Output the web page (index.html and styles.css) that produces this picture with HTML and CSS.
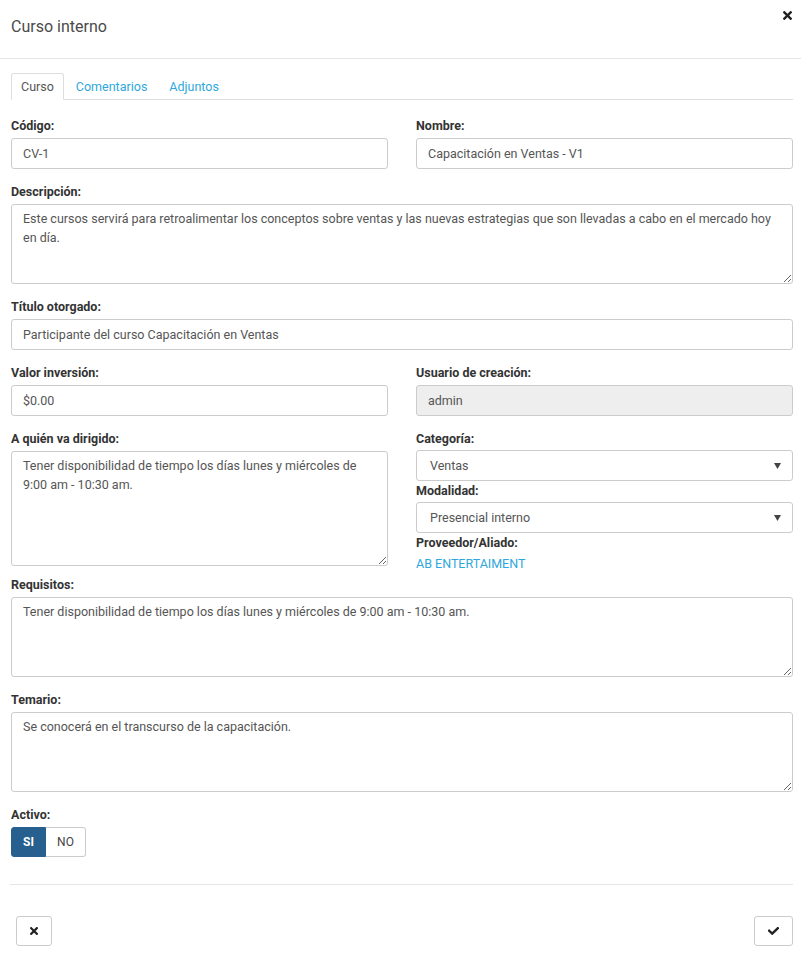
FILE: index.html
```html
<!DOCTYPE html>
<html lang="es">
<head>
<meta charset="utf-8">
<title>Curso interno</title>
<link rel="stylesheet" href="styles.css">
</head>
<body>
<div class="modal">
  <div class="modal-header">
    <h4 class="modal-title">Curso interno</h4>
    <button class="close" type="button" aria-label="Cerrar">
      <svg width="9" height="9" viewBox="0 0 10 10"><path d="M1.5 1.5 L8.5 8.5 M8.5 1.5 L1.5 8.5" stroke="#222" stroke-width="2.6" stroke-linecap="square"/></svg>
    </button>
  </div>
  <div class="modal-body">
    <ul class="tabs">
      <li class="tab active"><a>Curso</a></li>
      <li class="tab"><a>Comentarios</a></li>
      <li class="tab"><a>Adjuntos</a></li>
    </ul>
    <div class="tab-content">
      <div class="row">
        <div class="group">
          <label>Código:</label>
          <input class="control" type="text" value="CV-1">
        </div>
        <div class="group">
          <label>Nombre:</label>
          <input class="control" type="text" value="Capacitación en Ventas - V1">
        </div>
      </div>
      <div class="group">
        <label>Descripción:</label>
        <textarea class="control area">Este cursos servirá para retroalimentar los conceptos sobre ventas y las nuevas estrategias que son llevadas a cabo en el mercado hoy en día.</textarea>
      </div>
      <div class="group">
        <label>Título otorgado:</label>
        <input class="control" type="text" value="Participante del curso Capacitación en Ventas">
      </div>
      <div class="row">
        <div class="group">
          <label>Valor inversión:</label>
          <input class="control" type="text" value="$0.00">
        </div>
        <div class="group">
          <label>Usuario de creación:</label>
          <input class="control disabled" type="text" value="admin" disabled>
        </div>
      </div>
      <div class="row row-tight">
        <div class="col">
          <label>A quién va dirigido:</label>
          <textarea class="control area tall">Tener disponibilidad de tiempo los días lunes y miércoles de 9:00 am - 10:30 am.</textarea>
        </div>
        <div class="col">
          <label>Categoría:</label>
          <div class="control select"><span>Ventas</span><svg width="7" height="6" viewBox="0 0 7 6"><path d="M0 0 H7 L3.5 6 Z" fill="#444"/></svg></div>
          <label>Modalidad:</label>
          <div class="control select"><span>Presencial interno</span><svg width="7" height="6" viewBox="0 0 7 6"><path d="M0 0 H7 L3.5 6 Z" fill="#444"/></svg></div>
          <label>Proveedor/Aliado:</label>
          <a class="link">AB ENTERTAIMENT</a>
        </div>
      </div>
      <div class="group">
        <label>Requisitos:</label>
        <textarea class="control area">Tener disponibilidad de tiempo los días lunes y miércoles de 9:00 am - 10:30 am.</textarea>
      </div>
      <div class="group">
        <label>Temario:</label>
        <textarea class="control area">Se conocerá en el transcurso de la capacitación.</textarea>
      </div>
      <div class="group last">
        <label>Activo:</label>
        <div class="btn-group">
          <button class="toggle on" type="button">SI</button>
          <button class="toggle" type="button">NO</button>
        </div>
      </div>
    </div>
  </div>
  <div class="modal-footer">
    <button class="btn btn-cancel" type="button" aria-label="Cancelar">
      <svg width="8" height="8" viewBox="0 0 10 10"><path d="M1.5 1.5 L8.5 8.5 M8.5 1.5 L1.5 8.5" stroke="#222" stroke-width="2.8" stroke-linecap="square"/></svg>
    </button>
    <button class="btn btn-ok" type="button" aria-label="Guardar">
      <svg width="11" height="8" viewBox="0 0 11 8"><path d="M1.2 3.8 L4.2 6.6 L9.8 1.2" fill="none" stroke="#222" stroke-width="2.4" stroke-linecap="square" stroke-linejoin="miter"/></svg>
    </button>
  </div>
</div>
</body>
</html>
```

FILE: styles.css
```css
* { box-sizing: border-box; }
html, body { margin: 0; padding: 0; background: #fff; }
body {
  font-family: Roboto, "Liberation Sans", Arial, sans-serif;
  font-size: 12.5px;
  color: #555;
}
.modal { width: 801px; }
.modal-header {
  display: flex;
  justify-content: space-between;
  align-items: flex-start;
  height: 59px;
  padding: 15px 9px 0 11px;
  border-bottom: 1px solid #e5e5e5;
}
.modal-title {
  margin: 0;
  font-size: 16px;
  font-weight: 400;
  line-height: 24px;
  color: #4a4a4a;
}
.close {
  border: 0;
  background: none;
  padding: 0;
  margin-top: -4px;
  line-height: 0;
  cursor: pointer;
}
.modal-body { padding: 14px 8px 12px 11px; }
.tabs {
  display: flex;
  list-style: none;
  margin: 0;
  padding: 0;
  height: 27px;
  border-bottom: 1px solid #ddd;
}
.tab { margin-right: 2px; }
.tab a {
  display: block;
  height: 27px;
  padding: 0 9px;
  line-height: 25px;
  color: #2ea8dc;
  border: 1px solid transparent;
  border-radius: 3px 3px 0 0;
}
.tab.active a {
  color: #555;
  background: #fff;
  border-color: #ddd #ddd transparent;
}
.tab-content { padding-top: 17px; }
.row {
  display: grid;
  grid-template-columns: 1fr 1fr;
  column-gap: 28px;
}
.row-tight { margin-bottom: 3px; align-items: start; }
.group { margin-bottom: 14px; }
.group.last { margin-bottom: 15px; }
label {
  display: block;
  font-weight: 700;
  color: #333;
  line-height: 18px;
  margin-bottom: 3px;
}
.control {
  display: block;
  width: 100%;
  height: 31px;
  padding: 0 11px;
  font-family: inherit;
  font-size: 12.5px;
  color: #555;
  background: #fff;
  border: 1px solid #ccc;
  border-radius: 3px;
  outline: none;
}
.control.disabled { background: #eee; color: #555; -webkit-text-fill-color: #555; opacity: 1; }
.area {
  height: 80px;
  padding: 4px 11px;
  line-height: 19px;
  resize: vertical;
}
.area.tall { height: 115px; }
.select {
  display: flex;
  align-items: center;
  justify-content: space-between;
  padding: 0 11px 0 13px;
  margin-top: -1px;
  margin-bottom: 1px;
}
.link {
  display: block;
  line-height: 18px;
  color: #2ea8dc;
  cursor: pointer;
}
.btn-group { display: flex; }
.toggle {
  height: 30px;
  font-family: inherit;
  font-size: 12px;
  border: 1px solid #ccc;
  background: #fff;
  color: #444;
  padding: 0 9px;
}
.toggle:first-child { border-radius: 3px 0 0 3px; }
.toggle:last-child { border-radius: 0 3px 3px 0; border-left: 0; width: 40px; }
.toggle.on {
  background: #275f8f;
  border-color: #275f8f;
  color: #fff;
  font-weight: 700;
  width: 35px;
}
.modal-footer {
  display: flex;
  justify-content: space-between;
  margin: 0 8px 0 10px;
  padding: 31px 0 15px 6px;
  border-top: 1px solid #e5e5e5;
}
.btn {
  display: flex;
  align-items: center;
  justify-content: center;
  height: 30px;
  border: 1px solid #ccc;
  border-radius: 3px;
  background: #fff;
  padding: 0;
}
.btn-cancel { width: 36px; }
.btn-ok { width: 39px; }
```
